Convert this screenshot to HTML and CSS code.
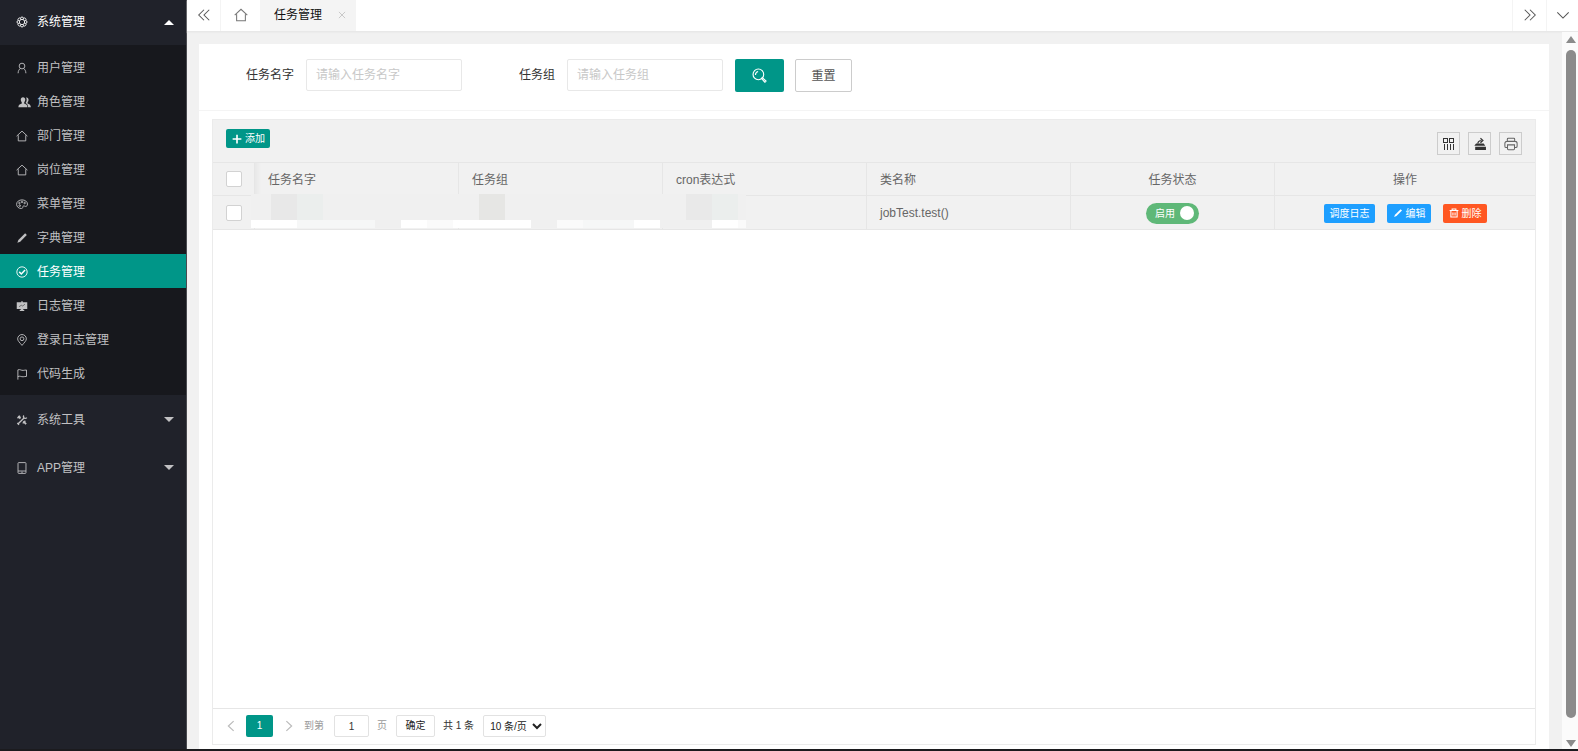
FILE: index.html
```html
<!DOCTYPE html>
<html lang="zh-CN">
<head>
<meta charset="utf-8">
<title>任务管理</title>
<link rel="stylesheet" href="styles.css">
</head>
<body>
<svg class="defs" aria-hidden="true">
  <symbol id="i-gear" viewBox="0 0 16 16"><circle cx="8" cy="8" r="3.600"/><path d="M5.900 2.900a2.200 2.200 0 0 1 4.200 0 2.200 2.200 0 0 1 3 3 2.200 2.200 0 0 1 0 4.200 2.200 2.200 0 0 1-3 3 2.200 2.200 0 0 1-4.200 0 2.200 2.200 0 0 1-3-3 2.200 2.200 0 0 1 0-4.200 2.200 2.200 0 0 1 3-3zM5.900 2.900l.8 1.700M10.100 2.900l-.8 1.700M13.100 5.900l-1.700.8M13.100 10.100l-1.700-.8M10.100 13.100l-.8-1.700M5.900 13.100l.8-1.700M2.900 10.100l1.700-.8M2.900 5.900l1.700.8"/></symbol>
  <symbol id="i-user" viewBox="0 0 16 16"><circle cx="8" cy="5.400" r="3.800"/><path d="M6 8.600C4 9.800 3 11.800 2.800 15M10 8.600c2 1.200 3 3.200 3.200 6.400"/></symbol>
  <symbol id="i-group" viewBox="0 0 18 16"><path fill="currentColor" stroke="none" d="M7 1.500c2 0 3 1.400 3 3.300 0 1.500-.6 2.900-1.400 3.700v1.600c1.800.8 4.400 1.500 4.400 4.900H.8c0-3.400 2.800-4.100 4.600-4.900V8.500C4.600 7.700 4 6.300 4 4.800c0-1.900 1-3.300 3-3.300zM11.600 2c1.900 0 2.800 1.300 2.800 3.100 0 1.400-.5 2.700-1.300 3.400V10c1.800.7 4.400 1.500 4.400 5h-3.700c0-3-1.400-4.300-3.200-5.200V9c.9-1.100 1.300-2.500 1.300-4 0-1.100-.3-2.100-.9-2.900.2-.1.400-.1.600-.1z"/></symbol>
  <symbol id="i-home" viewBox="0 0 16 16"><path d="M.8 8.200 8 1.500l7.200 6.700M3 7v7.500h10V7"/></symbol>
  <symbol id="i-palette" viewBox="0 0 16 16"><path d="M8 2.500c4 0 7.300 2.400 7.300 5.600 0 2-1.200 3.200-2.300 3.200-1 0-1.600-1-2.800-.8-1.600.3-.8 1.700-1.300 2.600-.4.700-1 .9-1.800.9C3.400 14 .8 11.600.8 8.300.8 5 4 2.500 8 2.500z"/><circle cx="5" cy="10.200" r="1.100"/><circle cx="4.600" cy="6.700" r="1"/><circle cx="8" cy="5.200" r="1"/><circle cx="11.500" cy="6.700" r="1"/></symbol>
  <symbol id="i-pen" viewBox="0 0 16 16"><path fill="currentColor" stroke="none" d="M12.200 1.800l2.200 2.200L5.600 12.900 1.800 14.300l1.400-3.700z"/></symbol>
  <symbol id="i-check" viewBox="0 0 16 16"><circle cx="8" cy="8" r="6.900"/><path stroke-width="2" d="M4.300 7.800l2.800 2.800 5-5.200"/></symbol>
  <symbol id="i-board" viewBox="0 0 16 16"><path fill="currentColor" stroke="none" d="M7 1.500h2V3h6v9H9.500v1h1.500v1.500H5V13h1.500v-1H1V3h6z"/><path stroke="#555" stroke-width="1" d="M4 9l3-2 2 1 3-2.500"/></symbol>
  <symbol id="i-pin" viewBox="0 0 16 16"><path d="M8 15.200C5 11.500 2.200 9 2.200 6.500a5.800 5.800 0 0 1 11.600 0C13.800 9 11 11.500 8 15.200z"/><circle cx="8" cy="6.400" r="2.500"/></symbol>
  <symbol id="i-flag" viewBox="0 0 16 16"><path d="M2.500 15.500V2.500c3-1.200 4.500 1 7 .7 1.500-.1 2.500-.5 4.500-.5v8.500c-2 0-3 .5-4.500.5-2.500.2-4-1.500-7-.3"/></symbol>
  <symbol id="i-tools" viewBox="0 0 16 16"><path stroke-width="2.400" d="M3 3l3 3M9.800 9.800l3.700 3.700"/><path stroke-width="1.800" d="M2.600 13.400 10.400 5.600M2 5.500l3.500-3M10.500 2c-1.200 1.500-.5 3.600 1.500 3.800 1 .1 1.800-.3 2.400-1M1.800 12l2.200 2.200M9 12.500l3.500-3.500"/></symbol>
  <symbol id="i-phone" viewBox="0 0 16 16"><rect x="2.700" y=".8" width="10.600" height="14.400" rx="1"/><path d="M2.700 12h10.600M7 13.600h2"/></symbol>
  <symbol id="i-left2" viewBox="0 0 16 16"><path d="M8 2 2 8l6 6M14 2 8 8l6 6"/></symbol>
  <symbol id="i-right2" viewBox="0 0 16 16"><path d="M2 2l6 6-6 6M8 2l6 6-6 6"/></symbol>
  <symbol id="i-down" viewBox="0 0 16 16"><path d="M1.500 5 8 11.500 14.500 5"/></symbol>
  <symbol id="i-prev" viewBox="0 0 16 16"><path d="M11.500 1.500 4.500 8l7 6.500"/></symbol>
  <symbol id="i-next" viewBox="0 0 16 16"><path d="M4.500 1.500l7 6.500-7 6.500"/></symbol>
  <symbol id="i-close" viewBox="0 0 16 16"><path d="M3 3l10 10M13 3 3 13"/></symbol>
  <symbol id="i-search" viewBox="0 0 16 16"><circle cx="6.800" cy="6.800" r="5.700"/><path d="M3.700 7.500c0-2 .8-3.200 2.800-3.700"/><path d="M11 10.200l4 3.700-1.200 1.300-3.700-4z"/></symbol>
  <symbol id="i-plus" viewBox="0 0 16 16"><path stroke-width="2.600" d="M8 1v14M1 8h14"/></symbol>
  <symbol id="i-cols" viewBox="0 0 14 14"><path stroke-width="1" shape-rendering="crispEdges" d="M1.500 1.500h4v4h-4zM7.500 1.500h4v4h-4zM2.500 7v6M5.500 7v6M8.500 7v6M11.500 7v6"/></symbol>
  <symbol id="i-export" viewBox="0 0 16 16"><path fill="currentColor" stroke="none" d="M2.500 11h12.300v3.800H2.500zM1.500 10l2-2.500h8.700l1.800 2.500z"/><path stroke-width="1.400" d="M5.500 7.500c.2-2.200 1.500-3.500 4.300-3.500M8.500 1.500l2.800 2.500-2.800 2.500"/></symbol>
  <symbol id="i-print" viewBox="0 0 16 16"><path d="M3.800 5V2.500c0-.6.400-1 1-1h6.400c.6 0 1 .4 1 1V5M4 12H2.500C1.500 12 1 11.500 1 10.500V7.500C1 6 1.800 5 3.200 5h9.600C14.200 5 15 6 15 7.500v3c0 1-.5 1.500-1.500 1.500H12"/><path d="M4 9h8v4.500c0 .6-.4 1-1 1H5c-.6 0-1-.4-1-1z"/></symbol>
  <symbol id="i-trash" viewBox="0 0 16 16"><path stroke-width="1.700" d="M1 4h14M5 4V1.500h6V4M3 4v10.500h10V4M6.300 7v5M9.700 7v5"/></symbol>
</svg>

<div class="app">
  <nav class="side">
    <button class="group group-open" type="button"><svg class="ico"><use href="#i-gear"/></svg>系统管理<span class="caret caret-up"></span></button>
    <div class="submenu">
      <a class="item" href="#"><svg class="ico"><use href="#i-user"/></svg>用户管理</a>
      <a class="item" href="#"><svg class="ico ico-wide"><use href="#i-group"/></svg>角色管理</a>
      <a class="item" href="#"><svg class="ico"><use href="#i-home"/></svg>部门管理</a>
      <a class="item" href="#"><svg class="ico"><use href="#i-home"/></svg>岗位管理</a>
      <a class="item" href="#"><svg class="ico"><use href="#i-palette"/></svg>菜单管理</a>
      <a class="item" href="#"><svg class="ico"><use href="#i-pen"/></svg>字典管理</a>
      <a class="item item-on" href="#"><svg class="ico"><use href="#i-check"/></svg>任务管理</a>
      <a class="item" href="#"><svg class="ico"><use href="#i-board"/></svg>日志管理</a>
      <a class="item" href="#"><svg class="ico"><use href="#i-pin"/></svg>登录日志管理</a>
      <a class="item" href="#"><svg class="ico"><use href="#i-flag"/></svg>代码生成</a>
    </div>
    <button class="group" type="button"><svg class="ico"><use href="#i-tools"/></svg>系统工具<span class="caret"></span></button>
    <button class="group" type="button"><svg class="ico"><use href="#i-phone"/></svg>APP管理<span class="caret"></span></button>
  </nav>

  <div class="main">
    <header class="tabs">
      <button class="tab-btn" type="button" aria-label="向左"><svg class="ico-l"><use href="#i-left2"/></svg></button>
      <a class="tab-home" href="#" aria-label="首页"><svg class="ico-l"><use href="#i-home"/></svg></a>
      <div class="tab-on"><a href="#">任务管理</a><button type="button" class="tab-close" aria-label="关闭"><svg><use href="#i-close"/></svg></button></div>
      <span class="grow"></span>
      <button class="tab-btn tab-right" type="button" aria-label="向右"><svg class="ico-l"><use href="#i-right2"/></svg></button>
      <button class="tab-btn tab-right tab-more" type="button" aria-label="更多"><svg class="ico-l"><use href="#i-down"/></svg></button>
    </header>

    <div class="body">
      <div class="page">
        <section class="card">
          <form class="search">
            <label for="job">任务名字</label><input id="job" class="field" type="text" placeholder="请输入任务名字">
            <label for="grp">任务组</label><input id="grp" class="field field-last" type="text" placeholder="请输入任务组">
            <button class="btn-search" type="button" aria-label="搜索"><svg><use href="#i-search"/></svg></button>
            <button class="btn-reset" type="reset">重置</button>
          </form>

          <div class="grid">
            <div class="toolbar">
              <button class="btn btn-green" type="button"><svg><use href="#i-plus"/></svg>添加</button>
              <span class="grow"></span>
              <button class="tool" type="button" aria-label="筛选列"><svg><use href="#i-cols"/></svg></button>
              <button class="tool" type="button" aria-label="导出"><svg><use href="#i-export"/></svg></button>
              <button class="tool tool-soft" type="button" aria-label="打印"><svg><use href="#i-print"/></svg></button>
            </div>
            <div class="table-wrap">
              <table>
                <colgroup><col class="c-check"><col class="c-data"><col class="c-data"><col class="c-data"><col class="c-data"><col class="c-data"><col></colgroup>
                <thead>
                  <tr><th class="check"><input type="checkbox" aria-label="全选"></th><th class="after-fixed">任务名字</th><th>任务组</th><th>cron表达式</th><th>类名称</th><th class="mid">任务状态</th><th class="mid">操作</th></tr>
                </thead>
                <tbody>
                  <tr><td class="check"><input type="checkbox" aria-label="选择"></td><td></td><td></td><td></td><td>jobTest.test()</td>
                    <td class="mid"><button class="switch" type="button" role="switch" aria-checked="true">启用<i></i></button></td>
                    <td class="mid"><div class="ops"><button class="btn btn-blue" type="button">调度日志</button><button class="btn btn-blue" type="button"><svg><use href="#i-pen"/></svg>编辑</button><button class="btn btn-red" type="button"><svg><use href="#i-trash"/></svg>删除</button></div></td></tr>
                </tbody>
              </table>
              <svg class="mosaic" width="495" height="34" shape-rendering="crispEdges" aria-hidden="true">
                <rect width="495" height="34" fill="#f0f0f0"/>
                <rect x="20" width="26" height="26" fill="#e8e8e8"/><rect x="46" width="26" height="26" fill="#ebeeed"/>
                <rect x="228" width="26" height="26" fill="#e6e6e4"/>
                <rect x="435" width="26" height="26" fill="#e9e9e9"/><rect x="461" width="26" height="26" fill="#ebeeed"/>
                <g fill="#fff"><rect y="26" width="46" height="8"/><rect x="150" y="26" width="26" height="8"/><rect x="202" y="26" width="78" height="8"/><rect x="383" y="26" width="26" height="8"/><rect x="461" y="26" width="26" height="8"/></g>
                <g fill="#fafafa"><rect x="176" y="26" width="26" height="8"/><rect x="306" y="26" width="26" height="8"/><rect x="487" y="26" width="8" height="8"/></g>
                <g fill="#f6f7f7"><rect x="46" y="26" width="78" height="8"/><rect x="332" y="26" width="51" height="8"/></g>
              </svg>
            </div>
            <div class="pager">
              <a class="pg pg-prev" href="#" aria-label="上一页"><svg><use href="#i-prev"/></svg></a>
              <a class="pg pg-on" href="#">1</a>
              <a class="pg" href="#" aria-label="下一页"><svg><use href="#i-next"/></svg></a>
              <label class="dim" for="pno">到第</label><input id="pno" class="pno" type="text" value="1"><span class="dim">页</span>
              <button class="pg-ok" type="button">确定</button>
              <span class="total">共 1 条</span>
              <select class="size" aria-label="每页条数"><option>10 条/页</option></select>
            </div>
          </div>
        </section>
      </div>
      <div class="scroll" aria-hidden="true"><span class="arrow arrow-up"></span><span class="thumb"></span><span class="arrow"></span></div>
    </div>
  </div>
</div>
<footer class="strip"></footer>
</body>
</html>
```
FILE: styles.css
```css
* { box-sizing: border-box; }
body {
  margin: 0;
  height: 100vh;
  display: flex;
  flex-direction: column;
  overflow: hidden;
  font: 12px/20px "Liberation Sans", "Noto Sans CJK SC", sans-serif;
  color: #333;
  background: #f1f1f1;
}
button, input, select { font: inherit; margin: 0; }
button { cursor: pointer; padding: 0; }
a { color: inherit; text-decoration: none; }
svg { fill: none; stroke: currentColor; stroke-width: 1.2; display: block; flex: none; }
.defs { position: absolute; width: 0; height: 0; }
.grow { flex: 1; }
.app { flex: 1; min-height: 0; display: flex; }
.strip { height: 2px; flex: none; background: #1b1b1e; }

/* Sidebar */
.side { width: 187px; flex: none; background: #20222a; border-right: 1px solid #4a4b50; }
.group, .item { display: flex; align-items: center; width: 100%; padding: 1px 12px 0 16px; color: #c1c1c3; }
.group { height: 48px; border: 0; background: none; text-align: left; }
.group-open { height: 45px; padding-bottom: 2px; color: #fff; }
.submenu { background: #17181d; padding: 5px 0; }
.item { height: 34px; padding-top: 2px; }
.item-on { background: #009688; color: #fff; }
.ico { width: 12px; height: 12px; margin-right: 9px; }
.ico-wide { width: 15px; margin: 0 5px 0 1px; }
.caret { margin-left: auto; border: 5px solid transparent; border-top-color: currentColor; border-bottom: 0; }
.caret-up { border-bottom: 5px solid currentColor; border-top: 0; }

/* Tab bar */
.main { flex: 1; min-width: 0; display: flex; flex-direction: column; }
.tabs { height: 32px; flex: none; display: flex; background: #fff; border-bottom: 1px solid #e8e8e8; box-shadow: 0 1px 1px #ececec; }
.tab-btn, .tab-home { display: flex; align-items: center; justify-content: center; width: 34px; border: 0; border-right: 1px solid #f4f4f4; background: #fff; color: #555; padding-bottom: 2px; }
.tab-home { width: 40px; color: #777; }
.tab-right { border-right: 0; border-left: 1px solid #f4f4f4; }
.tab-more { width: 32px; }
.ico-l { width: 14px; height: 14px; }
.tab-on { display: flex; align-items: center; gap: 15px; padding: 0 9px 2px 13px; background: #f4f4f4; color: #111; }
.tab-close { border: 0; background: none; color: #bbb; }
.tab-close svg { width: 10px; height: 10px; }

/* Page */
.body { flex: 1; min-height: 0; display: flex; }
.page { flex: 1; min-width: 0; padding: 12px 13px 0 12px; display: flex; }
.card { flex: 1; min-width: 0; background: #fff; display: flex; flex-direction: column; }
.search { display: flex; align-items: flex-start; padding: 15px 47px 18px; border-bottom: 1px solid #f4f4f4; }
.search label { line-height: 32px; margin-right: 12px; }
.field { width: 156px; height: 32px; padding: 0 9px; border: 1px solid #e8e8e8; border-radius: 2px; margin-right: 57px; color: #333; }
.field::placeholder { color: #c8c8c8; }
.field-last { margin-right: 12px; }
.btn-search { width: 49px; height: 33px; border: 0; border-radius: 2px; background: #009688; color: #fff; display: flex; align-items: center; justify-content: center; }
.btn-search svg { width: 15px; height: 15px; }
.btn-reset { width: 57px; height: 33px; margin-left: 11px; border: 1px solid #ccc; border-radius: 2px; background: #fff; color: #555; }

.grid { flex: 1; min-height: 0; margin: 8px 13px 4px; border: 1px solid #ebebeb; display: flex; flex-direction: column; }
.toolbar { display: flex; align-items: flex-start; height: 43px; padding: 9px 13px 0; background: #f1f1f1; border-bottom: 1px solid #e6e6e6; }
.btn { height: 19px; border: 0; border-radius: 2px; padding: 0 5px 0 6px; display: inline-flex; align-items: center; color: #fff; font-size: 10px; line-height: 19px; }
.btn svg { width: 10px; height: 10px; margin-right: 3px; }
.btn-green { background: #009688; }
.btn-blue { background: #1e9fff; }
.btn-red { background: #ff5722; }
.tool { width: 23px; height: 23px; margin: 3px 0 0 8px; border: 1px solid #ccc; background: none; color: #333; display: flex; align-items: center; justify-content: center; }
.tool svg { width: 14px; height: 14px; }
.tool-soft { color: #666; }
.table-wrap { flex: 1; position: relative; }
table { width: 100%; table-layout: fixed; border-collapse: separate; border-spacing: 0; background: #f1f1f1; color: #666; }
.c-check { width: 42px; }
.c-data { width: 204px; }
th, td { height: 33px; padding: 1px 13px 0; font-weight: normal; text-align: left; border: 0 solid #e6e6e6; border-width: 0 1px 1px 0; }
td { height: 34px; }
tr > :last-child { border-right: 0; }
th.mid, td.mid { text-align: center; }
th.check, td.check { padding: 0 0 0 13px; }
.after-fixed { background: linear-gradient(90deg, #e8e8e8, #f1f1f1 6px); }
input[type="checkbox"] { appearance: none; display: block; width: 16px; height: 16px; border: 1px solid #d2d2d2; border-radius: 2px; background: #fff; }
.ops { display: flex; justify-content: center; gap: 12px; }
.switch { width: 53px; height: 21px; border: 0; border-radius: 11px; background: #5fb878; color: #fff; font-size: 10px; line-height: 21px; padding: 0 5px 0 9px; display: inline-flex; align-items: center; justify-content: space-between; vertical-align: middle; }
.switch i { width: 14px; height: 14px; border-radius: 50%; background: #fff; }
.mosaic { position: absolute; left: 38px; top: 31px; stroke: none; }

/* Pagination */
.pager { height: 36px; flex: none; display: flex; align-items: center; padding: 0 10px 1px; border-top: 1px solid #e6e6e6; font-size: 10px; color: #333; }
.pg { width: 31px; display: flex; justify-content: center; color: #bbb; }
.pg svg { width: 12px; height: 12px; stroke-width: 1.6; }
.pg-prev { width: 16px; margin-right: 7px; }
.pg-on { width: 27px; background: #009688; color: #fff; border-radius: 2px; line-height: 22px; }
.dim { color: #999; }
.pno { width: 35px; height: 22px; margin: 0 8px 0 10px; border: 1px solid #e2e2e2; border-radius: 2px; text-align: center; color: #333; padding: 0; }
.pg-ok { width: 39px; height: 22px; margin: 0 8px 0 9px; border: 1px solid #e2e2e2; border-radius: 2px; background: #fff; color: #222; }
.total { margin-right: 9px; }
.size { width: 63px; height: 22px; border: 1px solid #e2e2e2; border-radius: 2px; background: #fff; color: #222; padding: 0 2px; }

/* Scroll rail */
.scroll { width: 16px; flex: none; background: #fbfbfb; display: flex; flex-direction: column; align-items: center; gap: 7px; padding: 4px 0 2px 2px; }
.thumb { flex: 1; width: 10px; border-radius: 5px; background: #8b8b8b; margin-bottom: 15px; }
.arrow { border: 5px solid transparent; border-top: 7px solid #8b8b8b; border-bottom: 0; }
.arrow-up { border-bottom: 7px solid #8b8b8b; border-top: 0; }
```
